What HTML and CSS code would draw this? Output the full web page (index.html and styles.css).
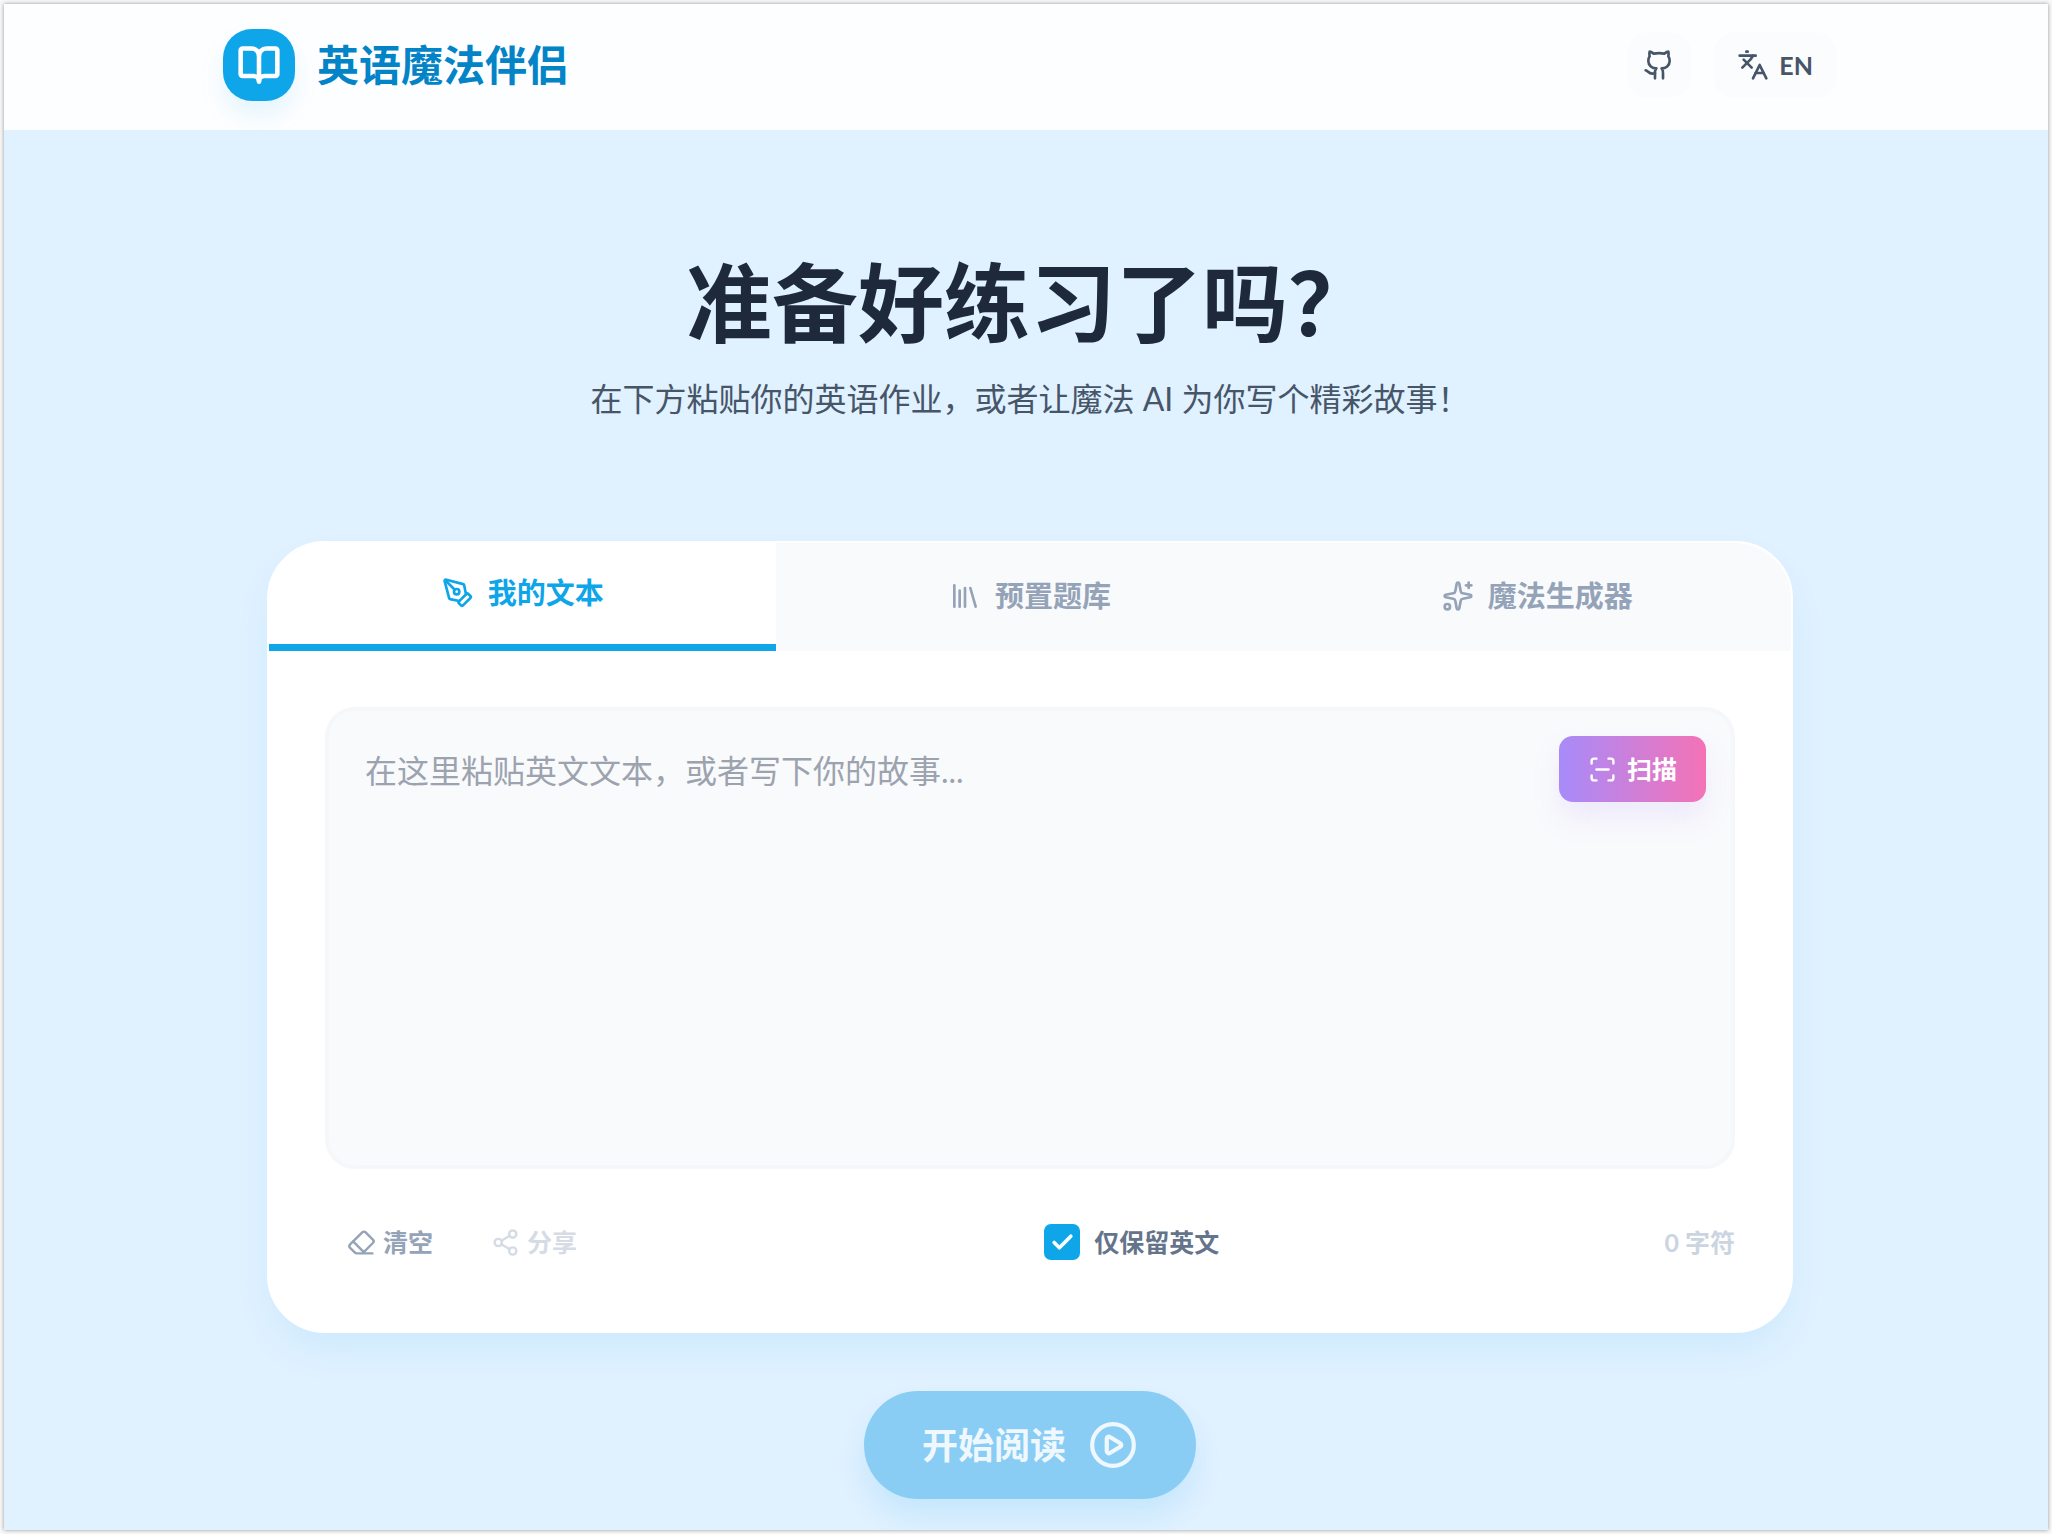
FILE: index.html
```html
<!DOCTYPE html>
<html lang="zh-CN">
  <head>
    <meta charset="UTF-8" />
    <meta name="viewport" content="width=device-width, initial-scale=1.0" />
    <title>英语魔法伴侣</title>
    <link rel="stylesheet" href="styles.css">
  </head>
  <body>
    <div class="app">
      <header class="header">
        <div class="header-inner">
          <div class="brand">
            <span class="brand-logo">
              <svg class="icon icon-lg" viewBox="0 0 24 24">
                <path d="M12 7v14" />
                <path d="M3 18a1 1 0 0 1-1-1V4a1 1 0 0 1 1-1h5a4 4 0 0 1 4 4 4 4 0 0 1 4-4h5a1 1 0 0 1 1 1v13a1 1 0 0 1-1 1h-6a3 3 0 0 0-3 3 3 3 0 0 0-3-3z" />
              </svg>
            </span>
            <span class="brand-name">英语魔法伴侣</span>
          </div>
          <nav class="header-actions">
            <a class="header-button" href="#" aria-label="GitHub">
              <svg class="icon icon-md" viewBox="0 0 24 24">
                <path d="M15 22v-4a4.8 4.8 0 0 0-1-3.5c3 0 6-2 6-5.5.08-1.25-.27-2.48-1-3.5.28-1.15.28-2.35 0-3.5 0 0-1 0-3 1.5-2.64-.5-5.36-.5-8 0C6 2 5 2 5 2c-.3 1.15-.3 2.35 0 3.5A5.403 5.403 0 0 0 4 9c0 3.5 3 5.5 6 5.5-.39.49-.68 1.05-.85 1.65-.17.6-.22 1.23-.15 1.85v4" />
                <path d="M9 18c-4.51 2-5-2-7-2" />
              </svg>
            </a>
            <button class="header-button header-lang" type="button">
              <svg class="icon icon-md" viewBox="0 0 24 24">
                <path d="m5 8 6 6" />
                <path d="m4 14 6-6 2-3" />
                <path d="M2 5h12" />
                <path d="M7 2h1" />
                <path d="m22 22-5-10-5 10" />
                <path d="M14 18h6" />
              </svg>
              EN
            </button>
          </nav>
        </div>
      </header>

      <main class="main">
        <h1>准备好练习了吗？</h1>
        <p class="subtitle">在下方粘贴你的英语作业，或者让魔法 AI 为你写个精彩故事！</p>

        <section class="card">
          <div class="tabs">
            <button class="tab active" type="button">
              <svg class="icon icon-md" viewBox="0 0 24 24">
                <path d="M15.707 21.293a1 1 0 0 1-1.414 0l-1.586-1.586a1 1 0 0 1 0-1.414l5.586-5.586a1 1 0 0 1 1.414 0l1.586 1.586a1 1 0 0 1 0 1.414z" />
                <path d="m18 13-1.375-6.874a1 1 0 0 0-.746-.776L3.235 2.028a1 1 0 0 0-1.207 1.207L5.35 15.879a1 1 0 0 0 .776.746L13 18" />
                <path d="m2.3 2.3 7.286 7.286" />
                <circle cx="11" cy="11" r="2" />
              </svg>
              我的文本
            </button>
            <button class="tab" type="button">
              <svg class="icon icon-md" viewBox="0 0 24 24">
                <path d="m16 6 4 14" />
                <path d="M12 6v14" />
                <path d="M8 8v12" />
                <path d="M4 4v16" />
              </svg>
              预置题库
            </button>
            <button class="tab" type="button">
              <svg class="icon icon-md" viewBox="0 0 24 24">
                <path d="M11.017 2.814a1 1 0 0 1 1.966 0l1.051 5.558a2 2 0 0 0 1.594 1.594l5.558 1.051a1 1 0 0 1 0 1.966l-5.558 1.051a2 2 0 0 0-1.594 1.594l-1.051 5.558a1 1 0 0 1-1.966 0l-1.051-5.558a2 2 0 0 0-1.594-1.594l-5.558-1.051a1 1 0 0 1 0-1.966l5.558-1.051a2 2 0 0 0 1.594-1.594z" />
                <path d="M20 2v4" />
                <path d="M22 4h-4" />
                <circle cx="4" cy="20" r="2" />
              </svg>
              魔法生成器
            </button>
          </div>

          <div class="card-body">
            <div class="editor">
              <textarea id="text" aria-label="我的文本" placeholder="在这里粘贴英文文本，或者写下你的故事..."></textarea>
              <button class="scan" type="button">
                <svg class="icon icon-sm" viewBox="0 0 24 24">
                  <path d="M3 7V5a2 2 0 0 1 2-2h2" />
                  <path d="M17 3h2a2 2 0 0 1 2 2v2" />
                  <path d="M21 17v2a2 2 0 0 1-2 2h-2" />
                  <path d="M7 21H5a2 2 0 0 1-2-2v-2" />
                  <path d="M7 12h10" />
                </svg>
                扫描
              </button>
            </div>

            <div class="toolbar">
              <div class="toolbar-actions">
                <button class="tool" id="clear" type="button">
                  <svg class="icon icon-sm" viewBox="0 0 24 24">
                    <path d="M21 21H8a2 2 0 0 1-1.42-.587l-3.994-3.999a2 2 0 0 1 0-2.828l10-10a2 2 0 0 1 2.829 0l5.999 6a2 2 0 0 1 0 2.828L12.834 21" />
                    <path d="m5.082 11.09 8.828 8.828" />
                  </svg>
                  清空
                </button>
                <button class="tool" type="button" disabled>
                  <svg class="icon icon-sm" viewBox="0 0 24 24">
                    <circle cx="18" cy="5" r="3" />
                    <circle cx="6" cy="12" r="3" />
                    <circle cx="18" cy="19" r="3" />
                    <path d="m8.59 13.51 6.83 3.98" />
                    <path d="m15.41 6.51-6.82 3.98" />
                  </svg>
                  分享
                </button>
              </div>
              <label class="filter" for="english-only">
                <span class="checkbox">
                  <input id="english-only" type="checkbox" checked />
                  <svg class="checkmark" viewBox="0 0 24 24">
                    <path d="M20 6 9 17l-5-5" />
                  </svg>
                </span>
                仅保留英文
              </label>
              <span class="count"><span id="count">0</span> 字符</span>
            </div>
          </div>
        </section>

        <button class="start" id="start" type="button" disabled>
          开始阅读
          <svg class="icon icon-xl" viewBox="0 0 24 24">
            <path d="M9 9.003a1 1 0 0 1 1.517-.859l4.997 2.997a1 1 0 0 1 0 1.718l-4.997 2.997A1 1 0 0 1 9 14.996z" />
            <circle cx="12" cy="12" r="10" />
          </svg>
        </button>
      </main>
    </div>

    <script>
      const text = document.getElementById("text");
      const count = document.getElementById("count");
      const start = document.getElementById("start");

      function updateCount() {
        count.textContent = text.value.length;
        start.disabled = !text.value.trim();
      }

      text.addEventListener("input", updateCount);
      document.getElementById("clear").addEventListener("click", () => {
        text.value = "";
        updateCount();
      });
    </script>
  </body>
</html>
```
FILE: styles.css
```css
* {
  margin: 0;
  padding: 0;
  box-sizing: border-box;
}

:root {
  --sky: #0ea5e9;
  --sky-dark: #0284c7;
  --sky-light: #e0f1ff;
  --panel: #f9fafc;
  --heading: #1e293b;
  --text: #475569;
  --muted: #94a3b8;
  --faint: #cbd5e1;
}

body {
  display: flex;
  min-height: 100vh;
  padding: 4px;
  background: #f8f8f8;
  color: var(--text);
  font-family: Lato, "Noto Sans CJK SC", sans-serif;
  font-size: 25px;
  line-height: 38px;
}

button,
textarea {
  border: none;
  font: inherit;
  color: inherit;
}

button {
  background: none;
  cursor: pointer;
}

button:disabled {
  cursor: not-allowed;
}

.app {
  flex: 1;
  overflow: hidden;
  background: var(--sky-light);
  box-shadow: 0 0 4px rgba(0, 0, 0, 0.4);
}

.icon {
  flex-shrink: 0;
  fill: none;
  stroke: currentColor;
  stroke-width: 2;
  stroke-linecap: round;
  stroke-linejoin: round;
}

.icon-sm {
  width: 29px;
  height: 29px;
}

.icon-md {
  width: 32px;
  height: 32px;
}

.icon-lg {
  width: 44px;
  height: 44px;
  stroke-width: 2.5;
}

.icon-xl {
  width: 50px;
  height: 50px;
}

/* header */
.header {
  padding: 25px 0 29px 8px;
  background: #fdfeff;
}

.header-inner {
  display: flex;
  align-items: center;
  justify-content: space-between;
  width: 80%;
  max-width: 1614px;
  margin: 0 auto;
}

.brand {
  display: flex;
  align-items: center;
  gap: 22px;
}

.brand-logo {
  display: flex;
  align-items: center;
  justify-content: center;
  width: 72px;
  height: 72px;
  border-radius: 29px;
  background: var(--sky);
  color: white;
  box-shadow: 0 14px 24px rgba(14, 165, 233, 0.1);
}

.brand-name {
  color: var(--sky-dark);
  font-size: 42px;
  font-weight: bold;
  line-height: 60px;
}

.header-actions {
  display: flex;
  gap: 22px;
}

.header-button {
  display: flex;
  align-items: center;
  gap: 10px;
  padding: 14px 16px;
  border-radius: 22px;
  background: #fbfcfe;
  color: var(--text);
  font-weight: bold;
}

.header-lang {
  padding: 14px 24px;
}

/* main */
.main {
  display: flex;
  flex-direction: column;
  align-items: center;
  padding: 124px 0 28px 8px;
}

h1 {
  color: var(--heading);
  font-size: 86px;
  line-height: 98px;
}

.subtitle {
  margin-top: 26px;
  font-size: 32px;
  line-height: 42px;
}

.card {
  width: 76%;
  max-width: 1526px;
  margin: 121px 0 58px;
  overflow: hidden;
  border: 2px solid white;
  border-radius: 58px;
  background: white;
  box-shadow: 0 20px 40px -8px rgba(14, 165, 233, 0.1);
}

.tabs {
  display: grid;
  grid-template-columns: repeat(3, 1fr);
  background: var(--panel);
}

.tab {
  display: flex;
  align-items: center;
  justify-content: center;
  gap: 14px;
  min-height: 108px;
  padding-bottom: 2px;
  color: var(--muted);
  font-size: 29px;
  font-weight: bold;
}

.tab.active {
  border-bottom: 7px solid var(--sky);
  background: white;
  color: var(--sky);
}

.card-body {
  padding: 56px;
}

.editor {
  position: relative;
}

.editor textarea {
  display: block;
  width: 100%;
  height: 462px;
  padding: 32px 200px 32px 36px;
  border: 4px solid #f5f7fa;
  border-radius: 30px;
  outline: none;
  background: var(--panel);
  font-size: 32px;
  line-height: 56px;
  resize: none;
}

.editor textarea::placeholder {
  color: #9ca3af;
}

.scan {
  position: absolute;
  top: 29px;
  right: 29px;
  display: flex;
  align-items: center;
  gap: 10px;
  padding: 14px 29px;
  border-radius: 14px;
  background: linear-gradient(to right, #a78bfa, #f472b6);
  color: white;
  font-weight: bold;
  box-shadow: 0 16px 28px rgba(167, 139, 250, 0.14);
}

.toolbar {
  display: flex;
  align-items: center;
  justify-content: space-between;
  margin-top: 40px;
  font-weight: bold;
}

.toolbar-actions {
  display: flex;
  gap: 14px;
}

.tool {
  display: flex;
  align-items: center;
  gap: 7px;
  padding: 14px 22px;
  color: var(--muted);
  font-weight: bold;
}

.tool:disabled {
  color: #d6dce5;
}

.filter {
  display: flex;
  align-items: center;
  gap: 14px;
  color: #64748b;
  cursor: pointer;
}

.checkbox {
  display: grid;
  width: 36px;
  height: 36px;
}

.checkbox input,
.checkmark {
  grid-area: 1 / 1;
}

.checkbox input {
  appearance: none;
  border: 3px solid var(--faint);
  border-radius: 7px;
  cursor: pointer;
}

.checkbox input:checked {
  border-color: var(--sky);
  background: var(--sky);
}

.checkmark {
  place-self: center;
  width: 25px;
  height: 25px;
  fill: none;
  stroke: white;
  stroke-width: 3.5;
  stroke-linecap: round;
  stroke-linejoin: round;
  pointer-events: none;
}

.count {
  color: var(--faint);
}

.start {
  display: flex;
  align-items: center;
  gap: 22px;
  padding: 28px 58px;
  border-radius: 54px;
  background: var(--sky);
  color: white;
  font-size: 36px;
  font-weight: bold;
  line-height: 52px;
  box-shadow: 0 18px 28px rgba(14, 165, 233, 0.12);
}

.start:disabled {
  background: #8acdf4;
  color: #f0f8ff;
}
```
